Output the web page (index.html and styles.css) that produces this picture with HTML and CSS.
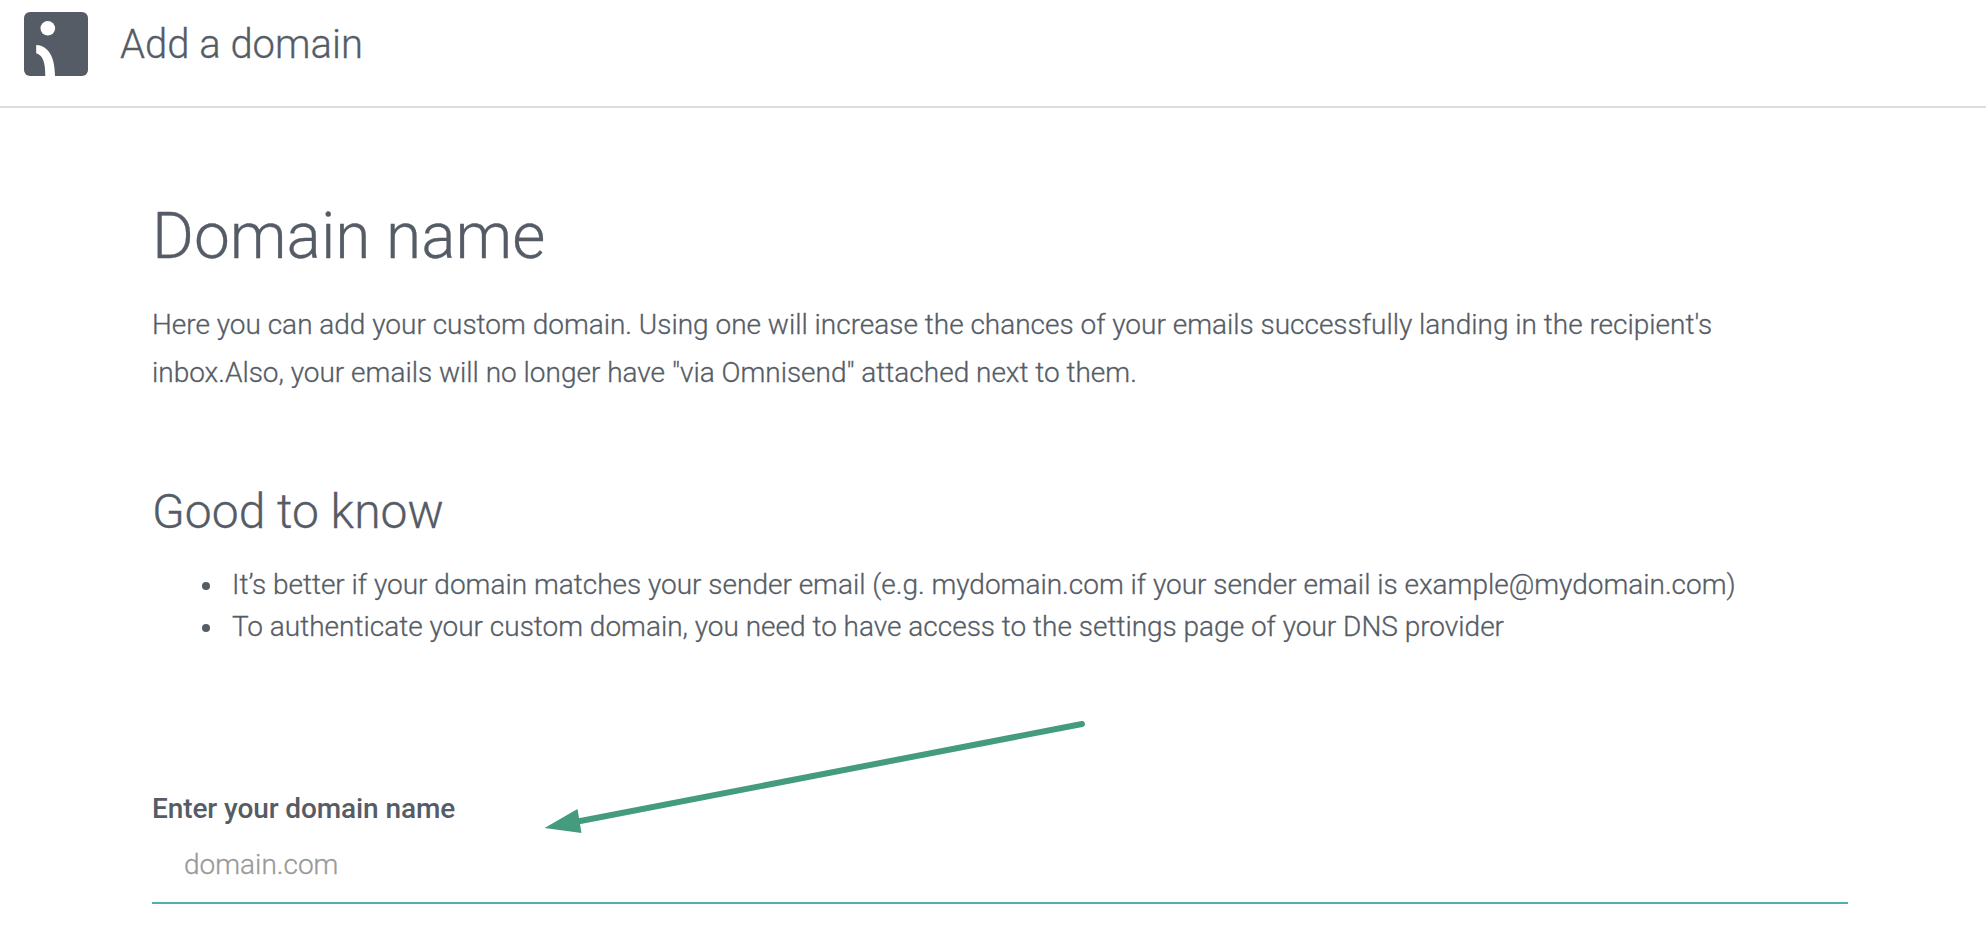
FILE: index.html
```html
<!DOCTYPE html>
<html lang="en">
<head>
    <meta charset="UTF-8">
    <meta name="viewport" content="width=device-width, initial-scale=1.0">
    <title>Add a domain</title>
    <link rel="stylesheet" href="styles.css">
</head>
<body>
    <header class="header">
        <svg class="logo" viewBox="0 0 64 64">
            <rect width="64" height="64" rx="6" fill="#555c66"/>
            <circle cx="23.8" cy="16.3" r="7.3" fill="#fff"/>
            <path d="M12.2 33C23 33.5 31 43 31 64H21.3C21.3 50 19 43.5 12.2 41.3Z" fill="#fff"/>
        </svg>
        <span class="header-title">Add a domain</span>
    </header>
    <main class="content">
        <h1 class="title">Domain name</h1>
        <p class="intro">Here you can add your custom domain. Using one will increase the chances of your emails successfully landing in the recipient's<br>inbox.Also, your emails will no longer have "via Omnisend" attached next to them.</p>
        <h2 class="subtitle">Good to know</h2>
        <ul class="tips">
            <li>It’s better if your domain matches your sender email (e.g. mydomain.com if your sender email is example@mydomain.com)</li>
            <li>To authenticate your custom domain, you need to have access to the settings page of your DNS provider</li>
        </ul>
        <label class="label" for="domain">Enter your domain name</label>
        <input class="input" id="domain" type="text" placeholder="domain.com">
    </main>
    <svg class="arrow" viewBox="0 0 560 130">
        <path d="M552 14L40 113" stroke="#459b7e" stroke-width="6" stroke-linecap="round"/>
        <path d="M14.5 118L47.5 99L51.5 123Z" fill="#459b7e"/>
    </svg>
</body>
</html>
```

FILE: styles.css
```css
*{
    box-sizing: border-box;
}
body{
    margin: 0;
    height: 950px;
    overflow: hidden;
    position: relative;
    background-color: #fff;
    color: #555c66;
    font-family: Roboto, sans-serif;
    font-weight: 300;
    -webkit-text-stroke: 0.3px;
}
.header{
    display: flex;
    height: 108px;
    padding: 12px 24px;
    border-bottom: 2px solid #dddddd;
}
.logo{
    width: 64px;
    height: 64px;
    margin-right: 32px;
}
.header-title{
    font-size: 40px;
    line-height: 66px;
}
.content{
    padding: 91px 138px 0 152px;
}
.title{
    margin: 0;
    font-size: 64px;
    font-weight: 300;
    line-height: 76px;
}
.intro{
    margin: 26px 0 0;
    font-size: 28px;
    line-height: 48px;
    letter-spacing: -0.01px;
    white-space: nowrap;
}
.subtitle{
    margin: 85px 0 0;
    font-size: 48px;
    font-weight: 300;
    line-height: 60px;
}
.tips{
    margin: 22px 0 0;
    padding-left: 50px;
    list-style: none;
    font-size: 28px;
    line-height: 42px;
    letter-spacing: -0.01px;
    white-space: nowrap;
}
.tips li{
    display: flex;
    align-items: center;
}
.tips li::before{
    content: "";
    width: 8px;
    height: 8px;
    margin: 2px 22px 0 0;
    border-radius: 50%;
    background-color: #555c66;
}
.label{
    display: block;
    margin-top: 141px;
    font-size: 28px;
    font-weight: 500;
    line-height: 40px;
    letter-spacing: -0.1px;
    -webkit-text-stroke: 0;
}
.input{
    display: block;
    width: 100%;
    height: 75px;
    padding: 0 32px 2px;
    border: none;
    border-bottom: 2px solid #4fb0ac;
    outline: none;
    color: inherit;
    font: inherit;
    font-size: 28px;
}
.input::placeholder{
    color: #999;
}
.arrow{
    position: absolute;
    left: 530px;
    top: 710px;
    width: 560px;
    height: 130px;
}
```
